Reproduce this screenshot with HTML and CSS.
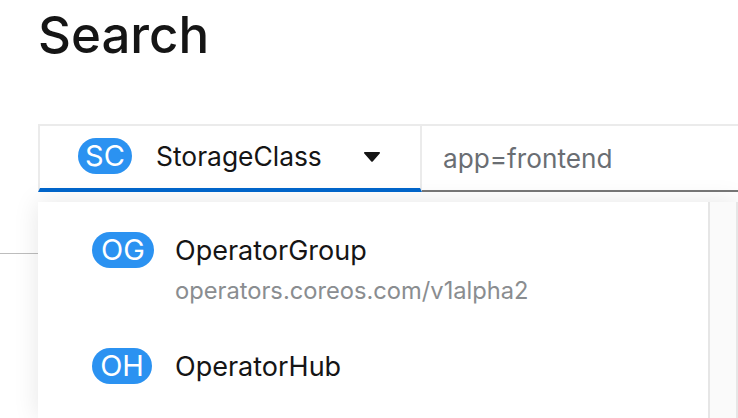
FILE: index.html
```html
<!DOCTYPE html>
<html lang="en">
<head>
    <meta charset="UTF-8">
    <title>Search</title>
    <link rel="stylesheet" href="styles.css">
</head>
<body>
    <h1 class="title">Search</h1>
    <div class="toolbar">
        <div class="type-toggle">
            <span class="badge badge-sc">SC</span>
            <span class="type-name">StorageClass</span>
            <svg class="caret" width="16" height="10" viewBox="0 0 16 10"><path d="M1 0h14c.9 0 1.300 1 .7 1.600l-7 7.800c-.4.400-1 .400-1.400 0l-7-7.800C-.3 1 .1 0 1 0z" fill="#151515"/></svg>
        </div>
        <div class="filter-input">app=frontend</div>
        <div class="menu">
            <div class="menu-list">
                <div class="menu-item item-og">
                    <span class="badge badge-og">OG</span>
                    <div class="item-text">
                        <div class="item-name">OperatorGroup</div>
                        <div class="item-group">operators.coreos.com/v1alpha2</div>
                    </div>
                </div>
                <div class="menu-item">
                    <span class="badge badge-oh">OH</span>
                    <div class="item-text">
                        <div class="item-name">OperatorHub</div>
                    </div>
                </div>
            </div>
            <div class="menu-track"></div>
        </div>
    </div>
    <div class="divider"></div>
</body>
</html>
```

FILE: styles.css
```css
html, body {
    height: 100%;
}
body {
    margin: 0;
    overflow: hidden;
    background-color: #fff;
    color: #151515;
    font-family: Inter, "Liberation Sans", sans-serif;
}
.title {
    margin: 0;
    padding: 5px 0 0 38px;
    height: 124px;
    box-sizing: border-box;
    font-size: 51px;
    line-height: 60px;
    font-weight: 500;
}
.toolbar {
    position: relative;
    display: flex;
    margin-left: 38px;
    height: 68px;
    box-sizing: border-box;
    border-top: 2px solid #ebebeb;
}
.type-toggle {
    display: flex;
    align-items: center;
    width: 384px;
    box-sizing: border-box;
    padding: 0 0 2px 38px;
    border-left: 2px solid #ebebeb;
    border-right: 2px solid #ebebeb;
    border-bottom: 4px solid #0066cc;
}
.badge {
    flex: none;
    height: 36px;
    border-radius: 18px;
    background-color: #2b92f1;
    color: #fff;
    font-size: 29px;
    line-height: 36px;
    text-align: center;
}
.badge-sc {
    width: 54px;
}
.badge-og {
    width: 62px;
    margin-right: 21px;
}
.badge-oh {
    width: 60px;
    margin-right: 23px;
}
.type-name {
    margin-left: 24px;
    width: 208px;
    font-size: 26.4px;
}
.caret {
    flex: none;
    margin-top: 2px;
}
.filter-input {
    flex: 1;
    box-sizing: border-box;
    padding: 15px 0 0 21px;
    border-bottom: 2px solid #777;
    color: #6a6e73;
    font-size: 26.2px;
    line-height: 36px;
}
.menu {
    position: absolute;
    left: 0;
    right: 0;
    top: 76px;
    height: 216px;
    display: flex;
    background-color: #fff;
    box-shadow: 0 0 24px rgba(3, 3, 3, 0.1);
}
.menu-list {
    flex: 1;
    box-sizing: border-box;
    padding: 30px 0 0 54px;
    border-right: 2px solid #e6e6e6;
}
.menu-track {
    width: 26px;
    background-color: #fafafa;
    border-right: 2px solid #e6e6e6;
}
.menu-item {
    display: flex;
    align-items: flex-start;
}
.item-og {
    margin-bottom: 41px;
}
.item-name {
    font-size: 27px;
    line-height: 38px;
}
.item-group {
    margin-top: 5px;
    color: #8a8d90;
    font-size: 23.7px;
    line-height: 32px;
}
.divider {
    margin-top: 61px;
    height: 1px;
    background-color: #bdbdbd;
}
```
